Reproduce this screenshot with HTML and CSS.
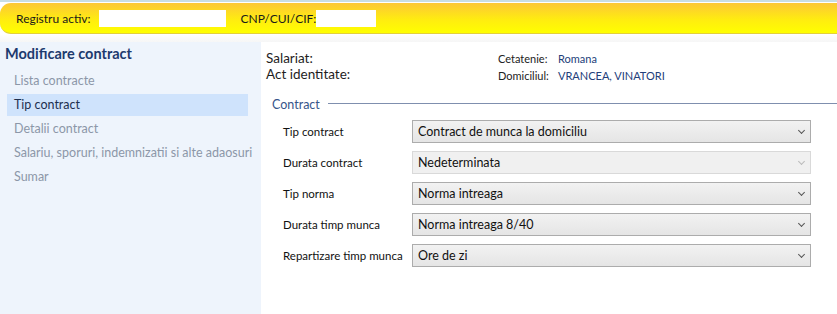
FILE: index.html
```html
<!DOCTYPE html>
<html lang="ro">
<head>
  <meta charset="UTF-8">
  <title>Modificare contract</title>
  <link rel="stylesheet" href="styles.css">
</head>
<body>
  <!-- Bara registru -->
  <div class="topline"></div>
  <div class="registry-bar">
    <span class="reg-label">Registru activ:</span>
    <span class="reg-box reg-box-wide"></span>
    <span class="reg-label reg-label-cnp">CNP/CUI/CIF:</span>
    <span class="reg-box reg-box-small"></span>
  </div>
  <div class="gap-band"></div>

  <div class="main">
    <!-- Meniu stanga -->
    <div class="sidebar">
      <div class="side-title">Modificare contract</div>
      <div class="side-item">Lista contracte</div>
      <div class="side-item active">Tip contract</div>
      <div class="side-item">Detalii contract</div>
      <div class="side-item">Salariu, sporuri, indemnizatii si alte adaosuri</div>
      <div class="side-item">Sumar</div>
    </div>

    <!-- Continut -->
    <div class="content">
      <div class="person">
        <div class="person-left">
          <div>Salariat:</div>
          <div>Act identitate:</div>
        </div>
        <div class="person-right">
          <div class="info-row"><span class="info-label">Cetatenie:</span><span class="info-value">Romana</span></div>
          <div class="info-row"><span class="info-label">Domiciliul:</span><span class="info-value">VRANCEA, VINATORI</span></div>
        </div>
      </div>

      <div class="group-head">
        <span class="group-title">Contract</span>
        <span class="group-line"></span>
      </div>

      <div class="form">
        <div class="form-row">
          <span class="form-label">Tip contract</span>
          <div class="combo"><span>Contract de munca la domiciliu</span><span class="chev"></span></div>
        </div>
        <div class="form-row">
          <span class="form-label">Durata contract</span>
          <div class="combo disabled"><span>Nedeterminata</span><span class="chev"></span></div>
        </div>
        <div class="form-row">
          <span class="form-label">Tip norma</span>
          <div class="combo"><span>Norma intreaga</span><span class="chev"></span></div>
        </div>
        <div class="form-row">
          <span class="form-label">Durata timp munca</span>
          <div class="combo"><span>Norma intreaga 8/40</span><span class="chev"></span></div>
        </div>
        <div class="form-row">
          <span class="form-label">Repartizare timp munca</span>
          <div class="combo"><span>Ore de zi</span><span class="chev"></span></div>
        </div>
      </div>
    </div>
  </div>
</body>
</html>
```

FILE: styles.css
```css
body {
  margin: 0;
  overflow: hidden;
  font-family: Lato, "Open Sans", sans-serif;
  font-size: 12px;
  color: #1b1b1b;
  background: #fff;
}
.topline {
  height: 2px;
  background: #c9dde3;
}
.registry-bar {
  margin-top: 1px;
  height: 30px;
  display: flex;
  align-items: center;
  padding-left: 16px;
  border-radius: 11px 0 0 11px;
  background: linear-gradient(#fcc737, #ffec10 55%, #ffff00);
  border-bottom: 1px solid #e3cf3c;
}
.reg-label {
  color: #1a1a1a;
  font-size: 12px;
}
.reg-box {
  background: #fff;
  height: 17px;
}
.reg-box-wide {
  width: 127px;
  margin-left: 8px;
}
.reg-label-cnp {
  margin-left: 15px;
}
.reg-box-small {
  width: 60px;
  margin-left: 0;
}
.gap-band {
  height: 8px;
  background: linear-gradient(#fff, #f6f6f6);
}
.main {
  display: flex;
  height: 280px;
}
/* meniu */
.sidebar {
  width: 261px;
  background: #eef4fc;
  padding-top: 2px;
  box-sizing: border-box;
}
.side-title {
  font-size: 14.5px;
  font-weight: bold;
  color: #1d3a6e;
  padding-left: 5px;
  height: 26px;
  line-height: 20px;
}
.side-item {
  margin-left: 7px;
  width: 241px;
  height: 22px;
  line-height: 22px;
  padding-left: 7px;
  margin-bottom: 2px;
  box-sizing: border-box;
  color: #8c97a8;
  font-size: 12.5px;
  white-space: nowrap;
}
.side-item.active {
  background: #cfe3fc;
  color: #1d2f4f;
}
/* continut */
.content {
  flex: 1;
  padding-left: 5px;
}
.person {
  display: flex;
  padding-top: 8px;
}
.person-left {
  width: 232px;
  font-size: 13.5px;
  line-height: 16px;
  color: #1e1e1e;
}
.person-right {
  font-size: 11px;
  line-height: 17px;
}
.info-label {
  display: inline-block;
  width: 60px;
  color: #222;
}
.info-value {
  color: #23407a;
}
.group-head {
  display: flex;
  align-items: center;
  margin-top: 13px;
  padding-left: 6px;
}
.group-title {
  color: #36558a;
  font-size: 12.5px;
}
.group-line {
  flex: 1;
  height: 1px;
  background: #7f8fae;
  margin-left: 8px;
  margin-top: -3px;
}
.form {
  padding-left: 17px;
  padding-top: 4px;
}
.form-row {
  display: flex;
  align-items: center;
  height: 31px;
}
.form-label {
  width: 129px;
  font-size: 11.5px;
  color: #111;
  white-space: nowrap;
}
.combo {
  width: 399px;
  height: 23px;
  box-sizing: border-box;
  border: 1px solid #acacac;
  background: linear-gradient(#f2f2f2, #e5e5e5);
  display: flex;
  align-items: center;
  justify-content: space-between;
  padding: 0 6px 0 5px;
  font-size: 12.5px;
  color: #111;
}
.combo.disabled {
  background: #f0f0f0;
  border-color: #d9d9d9;
}
.chev {
  width: 4px;
  height: 4px;
  border-right: 1px solid #555;
  border-bottom: 1px solid #555;
  transform: rotate(45deg);
  margin-top: -3px;
}
.combo.disabled .chev {
  border-color: #bbb;
}
```
